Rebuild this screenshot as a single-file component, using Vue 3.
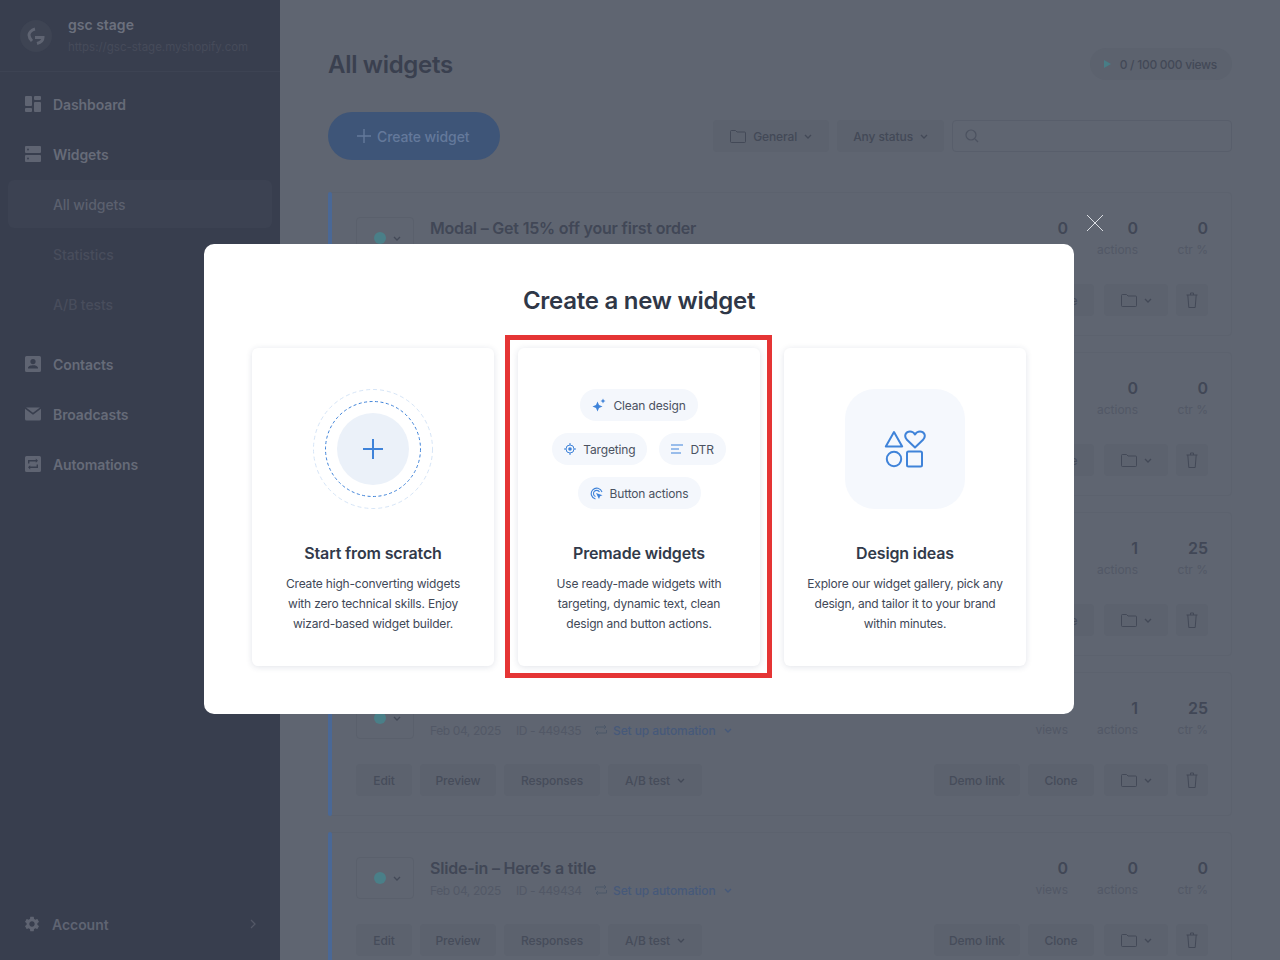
<script setup>
const mainNav = [
  { label: 'Dashboard', icon: 'dash' },
  { label: 'Widgets', icon: 'widgets' }
]
const subNav = [
  { label: 'All widgets', active: true },
  { label: 'Statistics' },
  { label: 'A/B tests' }
]
const lowerNav = [
  { label: 'Contacts', icon: 'contacts' },
  { label: 'Broadcasts', icon: 'mail' },
  { label: 'Automations', icon: 'auto' }
]
const widgets = [
  { title: 'Modal – Get 15% off your first order', id: 449438, views: 0, actions: 0, ctr: 0 },
  { title: 'Modal – Get 15% off your first order', id: 449437, views: 0, actions: 0, ctr: 0 },
  { title: 'Modal – Join our newsletter', id: 449436, views: 4, actions: 1, ctr: 25 },
  { title: 'Modal – Join our newsletter', id: 449435, views: 4, actions: 1, ctr: 25 },
  { title: 'Slide-in – Here’s a title', id: 449434, views: 0, actions: 0, ctr: 0 }
]
</script>

<template>
  <div class="page">
    <aside class="sidebar">
      <div class="store">
        <div class="store__logo">
          <svg width="22" height="22" viewBox="0 0 22 22" fill="none" stroke="#5f6472" stroke-width="3">
            <path d="M10 4C6 5 4 8 4 10c0 2 1 4 3 6" />
            <path d="M10 12.500h8c0 2.500-2 5-6 6" />
          </svg>
        </div>
        <div>
          <div class="store__name">gsc stage</div>
          <div class="store__url">https://gsc-stage.myshopify.com</div>
        </div>
      </div>

      <nav class="nav">
        <a v-for="item in mainNav" :key="item.label" class="nav__item">
          <svg class="nav__icon" viewBox="0 0 16 16" fill="#5f6472">
            <template v-if="item.icon === 'dash'">
              <rect x="0" y="0" width="7" height="10" rx="1" />
              <rect x="0" y="12" width="7" height="4" rx="1" />
              <rect x="9" y="0" width="7" height="4" rx="1" />
              <rect x="9" y="6" width="7" height="10" rx="1" />
            </template>
            <path
              v-else
              fill-rule="evenodd"
              d="M1 0h14a1 1 0 0 1 1 1v5a1 1 0 0 1-1 1H1a1 1 0 0 1-1-1V1a1 1 0 0 1 1-1zm2 2.600a.9.9 0 1 0 0 1.800.9.9 0 0 0 0-1.800zM1 9h14a1 1 0 0 1 1 1v5a1 1 0 0 1-1 1H1a1 1 0 0 1-1-1v-5a1 1 0 0 1 1-1zm2 2.600a.9.9 0 1 0 0 1.800.9.9 0 0 0 0-1.800z"
            />
          </svg>
          {{ item.label }}
        </a>
        <a
          v-for="item in subNav"
          :key="item.label"
          class="nav__item nav__item--sub"
          :class="{ 'nav__item--active': item.active }"
        >
          {{ item.label }}
        </a>
        <a v-for="(item, i) in lowerNav" :key="item.label" class="nav__item" :class="{ 'nav__item--first': i === 0 }">
          <svg class="nav__icon" viewBox="0 0 16 16" fill="#5f6472">
            <path
              v-if="item.icon === 'contacts'"
              fill-rule="evenodd"
              d="M1.500 0h13A1.500 1.500 0 0 1 16 1.500v13a1.500 1.500 0 0 1-1.500 1.500h-13A1.500 1.500 0 0 1 0 14.500v-13A1.500 1.500 0 0 1 1.500 0zM8 3a2.600 2.600 0 1 0 0 5.200A2.600 2.600 0 0 0 8 3zM3 12.500h10v-.8c0-1.700-3.300-2.500-5-2.500s-5 .8-5 2.500z"
            />
            <path
              v-else-if="item.icon === 'mail'"
              d="M1 1.500h14L8 6.800zM0 2.800l8 6 8-6V13a1.500 1.500 0 0 1-1.500 1.500h-13A1.500 1.500 0 0 1 0 13z"
            />
            <path
              v-else
              fill-rule="evenodd"
              d="M1.500 0h13A1.500 1.500 0 0 1 16 1.500v13a1.500 1.500 0 0 1-1.500 1.500h-13A1.500 1.500 0 0 1 0 14.500v-13A1.500 1.500 0 0 1 1.500 0zM3 7.500h1.400V5.400h6.400v1.400l2.200-2.100-2.200-2.100V4H3zm10 1h-1.400v2.100H5.200V9.200L3 11.300l2.200 2.100V12H13z"
            />
          </svg>
          {{ item.label }}
        </a>
      </nav>

      <a class="account">
        <svg class="account__icon" viewBox="0 0 24 24" fill="#5f6472">
          <path
            d="M19.14 12.94c.04-.3.06-.61.06-.94 0-.32-.02-.64-.07-.94l2.03-1.58c.18-.14.23-.41.12-.61l-1.92-3.32c-.12-.22-.37-.29-.59-.22l-2.39.96c-.5-.38-1.03-.7-1.62-.94l-.36-2.54c-.04-.24-.24-.41-.48-.41h-3.84c-.24 0-.43.17-.47.41l-.36 2.54c-.59.24-1.13.57-1.62.94l-2.39-.96c-.22-.08-.47 0-.59.22L2.74 8.87c-.12.21-.08.47.12.61l2.03 1.58c-.05.3-.09.63-.09.94s.02.64.07.94l-2.03 1.58c-.18.14-.23.41-.12.61l1.92 3.32c.12.22.37.29.59.22l2.39-.96c.5.38 1.03.7 1.62.94l.36 2.54c.05.24.24.41.48.41h3.84c.24 0 .44-.17.47-.41l.36-2.54c.59-.24 1.13-.56 1.62-.94l2.39.96c.22.08.47 0 .59-.22l1.92-3.32c.12-.22.07-.47-.12-.61l-2.01-1.58zM12 15.6c-1.98 0-3.6-1.62-3.6-3.6s1.62-3.6 3.6-3.6 3.6 1.62 3.6 3.6-1.62 3.6-3.6 3.6z"
          />
        </svg>
        Account
        <svg class="account__arrow" width="6" height="10" viewBox="0 0 6 10" fill="none" stroke="#535866" stroke-width="1.3">
          <path d="M1 1l4 4-4 4" />
        </svg>
      </a>
    </aside>

    <main class="main">
      <header class="head">
        <h1 class="head__title">All widgets</h1>
        <div class="views">
          <svg width="7" height="8" viewBox="0 0 7 8" fill="#487d86"><path d="M0 0l7 4-7 4z" /></svg>
          0 / 100 000 views
        </div>
      </header>

      <div class="toolbar">
        <button class="create">
          <svg width="14" height="14" viewBox="0 0 14 14" stroke="#64799b" stroke-width="1.4"><path d="M7 0v14M0 7h14" /></svg>
          Create widget
        </button>
        <div class="filters">
          <div class="filter filter--folder">
            <svg width="16" height="14" viewBox="0 0 16 14" fill="none" stroke="#434957"><path d="M.5 2.500a1 1 0 0 1 1-1h4l1.500 1.500h7.500a1 1 0 0 1 1 1v8.500a1 1 0 0 1-1 1h-13a1 1 0 0 1-1-1z" /></svg>
            General
            <svg class="chev" viewBox="0 0 8 5" fill="none" stroke="#434957" stroke-width="1.300"><path d="M1 1l3 3 3-3" /></svg>
          </div>
          <div class="filter">
            Any status
            <svg class="chev" viewBox="0 0 8 5" fill="none" stroke="#434957" stroke-width="1.300"><path d="M1 1l3 3 3-3" /></svg>
          </div>
          <div class="search">
            <svg width="14" height="14" viewBox="0 0 14 14" fill="none" stroke="#4c5260" stroke-width="1.200"><circle cx="6" cy="6" r="5" /><path d="M10 10l3 3" /></svg>
          </div>
        </div>
      </div>

      <div class="list">
        <article v-for="w in widgets" :key="w.id" class="row">
          <div class="row__top">
            <div class="status">
              <span class="status__dot"></span>
              <svg class="chev" viewBox="0 0 8 5" fill="none" stroke="#434957" stroke-width="1.300"><path d="M1 1l3 3 3-3" /></svg>
            </div>
            <div class="row__info">
              <div class="row__title">{{ w.title }}</div>
              <div class="row__meta">
                <span class="row__date">Feb 04, 2025</span>
                <span class="row__id">ID - {{ w.id }}</span>
                <svg width="12" height="12" viewBox="0 0 12 12" fill="none" stroke="#4d5869"><path d="M.5 6V3h10M9 1l2 2-2 2M11.500 6v3H1.500M3 7 1 9l2 2" /></svg>
                <span class="row__link">Set up automation</span>
                <svg class="chev" viewBox="0 0 8 5" fill="none" stroke="#46597a" stroke-width="1.300"><path d="M1 1l3 3 3-3" /></svg>
              </div>
            </div>
            <div class="stat"><b>{{ w.views }}</b><span>views</span></div>
            <div class="stat"><b>{{ w.actions }}</b><span>actions</span></div>
            <div class="stat"><b>{{ w.ctr }}</b><span>ctr %</span></div>
          </div>
          <div class="row__actions">
            <button class="act act--edit">Edit</button>
            <button class="act act--preview">Preview</button>
            <button class="act act--resp">Responses</button>
            <button class="act act--ab">
              A/B test
              <svg class="chev" viewBox="0 0 8 5" fill="none" stroke="#434957" stroke-width="1.300"><path d="M1 1l3 3 3-3" /></svg>
            </button>
            <span class="row__spacer"></span>
            <button class="act act--demo">Demo link</button>
            <button class="act act--clone">Clone</button>
            <button class="act act--folder">
              <svg width="16" height="14" viewBox="0 0 16 14" fill="none" stroke="#434957"><path d="M.5 2.500a1 1 0 0 1 1-1h4l1.500 1.500h7.500a1 1 0 0 1 1 1v8.500a1 1 0 0 1-1 1h-13a1 1 0 0 1-1-1z" /></svg>
              <svg class="chev" viewBox="0 0 8 5" fill="none" stroke="#434957" stroke-width="1.300"><path d="M1 1l3 3 3-3" /></svg>
            </button>
            <button class="act act--trash">
              <svg width="12" height="16" viewBox="0 0 12 16" fill="none" stroke="#434957"><path d="M.5 3h11M4.500 3V1h3v2M1.800 3l1 12.500h6.400l1-12.500" /></svg>
            </button>
          </div>
        </article>
      </div>
    </main>

    <div class="overlay">
      <section class="modal">
        <svg class="modal__close" viewBox="0 0 18 18" fill="none" stroke="#dcdfe4" stroke-width="1"><path d="M1 1l16 16M17 1L1 17" /></svg>
        <h2 class="modal__title">Create a new widget</h2>
        <div class="options">
          <div class="option">
            <div class="option__art">
              <svg width="120" height="120" viewBox="0 0 120 120" fill="none">
                <circle cx="60" cy="60" r="59.500" stroke="#d6e5f7" stroke-dasharray="4 3" />
                <circle cx="60" cy="60" r="47.500" stroke="#3f83d9" stroke-dasharray="3 2.500" />
                <circle cx="60" cy="60" r="36" fill="#ebf1f9" />
                <path d="M60 50v20M50 60h20" stroke="#3f83d9" stroke-width="2" />
              </svg>
            </div>
            <h3 class="option__title">Start from scratch</h3>
            <p class="option__text">Create high-converting widgets<br />with zero technical skills. Enjoy<br />wizard-based widget builder.</p>
          </div>

          <div class="option option--marked">
            <div class="option__art chips">
              <div class="chips__line">
                <span class="chip">
                  <svg width="14" height="14" viewBox="0 0 14 14" fill="#3f83d9">
                    <path d="M5.500 3.500 7 7l3.500 1.500L7 10l-1.500 3.500L4 10 .5 8.500 4 7zM11 .5l.8 1.700 1.700.8-1.700.8L11 5.500l-.8-1.700L8.500 3l1.700-.8z" />
                  </svg>
                  Clean design
                </span>
              </div>
              <div class="chips__line">
                <span class="chip">
                  <svg width="12" height="12" viewBox="0 0 12 12" fill="none" stroke="#3f83d9">
                    <circle cx="6" cy="6" r="4" />
                    <circle cx="6" cy="6" r="1.800" fill="#3f83d9" stroke="none" />
                    <path d="M6 0v2M6 10v2M0 6h2M10 6h2" />
                  </svg>
                  Targeting
                </span>
                <span class="chip">
                  <svg width="12" height="10" viewBox="0 0 12 10" fill="none" stroke="#3f83d9" stroke-width="1.200">
                    <path d="M0 1h12M0 5h8M0 9h10" />
                  </svg>
                  DTR
                </span>
              </div>
              <div class="chips__line">
                <span class="chip">
                  <svg width="13" height="13" viewBox="0 0 13 13" fill="none" stroke="#3f83d9" stroke-width="1.100">
                    <path d="M5.500 12A5.500 5.500 0 1 1 12 5" />
                    <path d="M5.500 9.500A3.200 3.200 0 1 1 9.500 5" />
                    <path d="M6 6l6.500 2.200-2.500 1-1 2.800z" fill="#3f83d9" stroke="none" />
                  </svg>
                  Button actions
                </span>
              </div>
            </div>
            <h3 class="option__title">Premade widgets</h3>
            <p class="option__text">Use ready-made widgets with<br />targeting, dynamic text, clean<br />design and button actions.</p>
          </div>

          <div class="option">
            <div class="option__art">
              <div class="shapes">
                <svg width="42" height="38" viewBox="0 0 42 38" fill="none" stroke="#3f83d9" stroke-width="2" stroke-linejoin="round">
                  <path d="M10 2 18.200 16.500H1.800z" />
                  <path d="M31 17.500 22.700 9.500C19.500 5.500 22 1.500 26 1.500c2.300 0 4 1.200 5 3 1-1.800 2.700-3 5-3 4 0 6.500 4 3.300 8z" />
                  <circle cx="10" cy="29" r="7.200" />
                  <rect x="23" y="21.500" width="15" height="15" rx="1.500" />
                </svg>
              </div>
            </div>
            <h3 class="option__title">Design ideas</h3>
            <p class="option__text">Explore our widget gallery, pick any<br />design, and tailor it to your brand<br />within minutes.</p>
          </div>
        </div>
      </section>
    </div>
  </div>
</template>

<style>
html,
body {
  margin: 0;
  overflow: hidden;
}
</style>

<style scoped>
.page {
  position: relative;
  display: flex;
  width: 1280px;
  height: 960px;
  overflow: hidden;
  background: #5f6571;
  font-family: Inter, 'Liberation Sans', sans-serif;
  color: #434957;
}
button {
  font-family: inherit;
  border: 0;
}
h1,
h2,
h3,
p {
  margin: 0;
}

.sidebar {
  display: flex;
  flex-direction: column;
  flex: 0 0 280px;
  background: #383e4e;
}
.store {
  display: flex;
  align-items: center;
  gap: 16px;
  height: 71px;
  padding-left: 20px;
  border-bottom: 1px solid #3d4353;
  box-sizing: content-box;
}
.store__logo {
  display: flex;
  align-items: center;
  justify-content: center;
  width: 32px;
  height: 32px;
  border-radius: 50%;
  background: #3e4453;
}
.store__name {
  font-size: 14px;
  font-weight: 600;
  line-height: 20px;
  color: #6b707d;
}
.store__url {
  font-size: 11.5px;
  line-height: 20px;
  margin-top: 2px;
  color: #464b5a;
}
.nav {
  display: flex;
  flex-direction: column;
  gap: 2px;
  padding: 8px 8px 0;
}
.nav__item {
  display: flex;
  align-items: center;
  gap: 12px;
  height: 48px;
  padding-left: 17px;
  font-size: 14px;
  font-weight: 600;
  letter-spacing: -0.1px;
  color: #666b78;
}
.nav__item--first {
  margin-top: 10px;
}
.nav__item--sub {
  padding-left: 45px;
  font-weight: 500;
  color: #484d5c;
}
.nav__item--active {
  border-radius: 6px;
  background: #3c4252;
  color: #5b606e;
}
.nav__icon {
  width: 16px;
  height: 16px;
}
.account {
  display: flex;
  align-items: center;
  gap: 12px;
  margin-top: auto;
  height: 48px;
  margin-bottom: 12px;
  padding: 0 24px;
  font-size: 14px;
  font-weight: 600;
  letter-spacing: -0.05px;
  color: #5f6472;
}
.account__icon {
  width: 18px;
  height: 18px;
  margin: 0 -1px;
}
.account__arrow {
  margin-left: auto;
}

.main {
  flex: 1;
  padding: 48px 48px 0;
  min-width: 0;
}
.head {
  display: flex;
  align-items: center;
  justify-content: space-between;
  height: 32px;
}
.head__title {
  font-size: 24px;
  font-weight: 600;
  letter-spacing: -0.3px;
  color: #3a404f;
}
.views {
  display: flex;
  align-items: center;
  gap: 9px;
  height: 32px;
  padding: 0 15px 0 14px;
  border-radius: 16px;
  background: #5c626e;
  font-size: 12px;
  font-weight: 500;
  letter-spacing: -0.27px;
}
.toolbar {
  display: flex;
  align-items: center;
  justify-content: space-between;
  margin-top: 32px;
}
.create {
  display: flex;
  align-items: center;
  gap: 6px;
  height: 48px;
  width: 172px;
  padding: 0 0 0 29px;
  border-radius: 24px;
  background: #3e5578;
  color: #64799b;
  font-size: 14px;
  font-weight: 500;
  letter-spacing: -0.1px;
}
.filters {
  display: flex;
  gap: 8px;
}
.filter {
  display: flex;
  align-items: center;
  gap: 7px;
  height: 32px;
  padding: 0 16px;
  border-radius: 4px;
  background: #5c626e;
  font-size: 12px;
  font-weight: 500;
  letter-spacing: -0.1px;
}
.filter--folder {
  padding: 0 17px;
}
.search {
  display: flex;
  align-items: center;
  width: 280px;
  height: 32px;
  box-sizing: border-box;
  padding-left: 12px;
  border: 1px solid #585e6b;
  border-radius: 4px;
}
.chev {
  width: 8px;
  height: 5px;
  flex: none;
}

.list {
  display: flex;
  flex-direction: column;
  gap: 16px;
  margin-top: 32px;
}
.row {
  position: relative;
  flex: none;
  height: 144px;
  box-sizing: border-box;
  padding: 24px 23px 0 27px;
  border: 1px solid #5c626e;
  border-radius: 4px;
}
.row::before {
  content: '';
  position: absolute;
  top: -1px;
  bottom: -1px;
  left: -1px;
  width: 4px;
  border-radius: 2px;
  background: #4a6896;
}
.row__top {
  display: flex;
  height: 42px;
}
.status {
  display: flex;
  align-items: center;
  gap: 7px;
  width: 58px;
  height: 42px;
  box-sizing: border-box;
  padding-left: 17px;
  border: 1px solid #5a606c;
  border-radius: 4px;
}
.status__dot {
  width: 12px;
  height: 12px;
  border-radius: 50%;
  background: #4a7f88;
}
.row__info {
  flex: 1;
  margin-left: 16px;
  margin-top: -1px;
}
.row__title {
  font-size: 16px;
  font-weight: 600;
  line-height: 24px;
  letter-spacing: -0.2px;
  color: #414756;
}
.row__meta {
  display: flex;
  align-items: center;
  height: 20px;
  font-size: 12px;
  color: #525866;
}
.row__date {
  width: 86px;
  letter-spacing: -0.4px;
}
.row__id {
  width: 79px;
  letter-spacing: -0.4px;
}
.row__link {
  margin: 0 8px 0 6px;
  color: #46597a;
  font-weight: 500;
  letter-spacing: -0.1px;
}
.stat {
  display: flex;
  flex-direction: column;
  align-items: flex-end;
  width: 70px;
  margin-top: -1px;
}
.stat b {
  font-size: 16px;
  font-weight: 600;
  line-height: 24px;
  color: #414756;
}
.stat span {
  font-size: 12px;
  line-height: 20px;
  color: #525866;
}
.row__actions {
  display: flex;
  gap: 8px;
  margin-top: 25px;
}
.row__spacer {
  flex: 1;
}
.act {
  display: flex;
  align-items: center;
  justify-content: center;
  gap: 7px;
  height: 32px;
  padding: 0;
  border-radius: 4px;
  background: #5c626e;
  color: #464c5a;
  font-size: 12px;
  font-weight: 500;
  letter-spacing: -0.1px;
}
.act--edit {
  width: 56px;
}
.act--preview {
  width: 76px;
}
.act--resp {
  width: 96px;
}
.act--ab {
  width: 94px;
}
.act--demo {
  width: 86px;
}
.act--clone {
  width: 66px;
}
.act--folder {
  width: 64px;
  margin-left: 2px;
}
.act--trash {
  width: 32px;
}

.overlay {
  position: absolute;
  inset: 0;
  padding: 244px 0 0 204px;
}
.modal {
  position: relative;
  width: 870px;
  height: 470px;
  box-sizing: border-box;
  padding: 40px 48px 48px;
  border-radius: 10px;
  background: #fff;
}
.modal__close {
  position: absolute;
  top: -30px;
  right: -30px;
  width: 18px;
  height: 18px;
}
.modal__title {
  font-size: 24px;
  font-weight: 600;
  line-height: 34px;
  letter-spacing: -0.25px;
  text-align: center;
  color: #2f3747;
}
.options {
  display: flex;
  gap: 24px;
  margin-top: 30px;
}
.option {
  position: relative;
  flex: 0 0 242px;
  height: 318px;
  box-sizing: border-box;
  padding-top: 41px;
  border-radius: 6px;
  background: #fff;
  box-shadow: 0 1px 6px rgba(40, 60, 100, 0.14);
  text-align: center;
}
.option--marked::after {
  content: '';
  position: absolute;
  top: -13px;
  left: -13px;
  right: -12px;
  bottom: -12px;
  border: 5px solid #e53535;
  pointer-events: none;
}
.option__art {
  display: flex;
  align-items: center;
  justify-content: center;
  height: 120px;
}
.option__title {
  margin-top: 32px;
  font-size: 16px;
  font-weight: 600;
  line-height: 24px;
  letter-spacing: -0.15px;
  color: #323a4a;
}
.option__text {
  margin-top: 9px;
  font-size: 12px;
  line-height: 20px;
  letter-spacing: -0.18px;
  color: #414857;
}
.chips {
  flex-direction: column;
  gap: 12px;
}
.chips__line {
  display: flex;
  justify-content: center;
  gap: 12px;
}
.chip {
  display: flex;
  align-items: center;
  gap: 7px;
  height: 32px;
  padding: 0 12px;
  border-radius: 16px;
  background: #f4f7fc;
  font-size: 12px;
  letter-spacing: -0.15px;
  color: #4b5261;
}
.shapes {
  display: flex;
  align-items: center;
  justify-content: center;
  width: 120px;
  height: 120px;
  border-radius: 30px;
  background: #f5f8fd;
}
</style>
